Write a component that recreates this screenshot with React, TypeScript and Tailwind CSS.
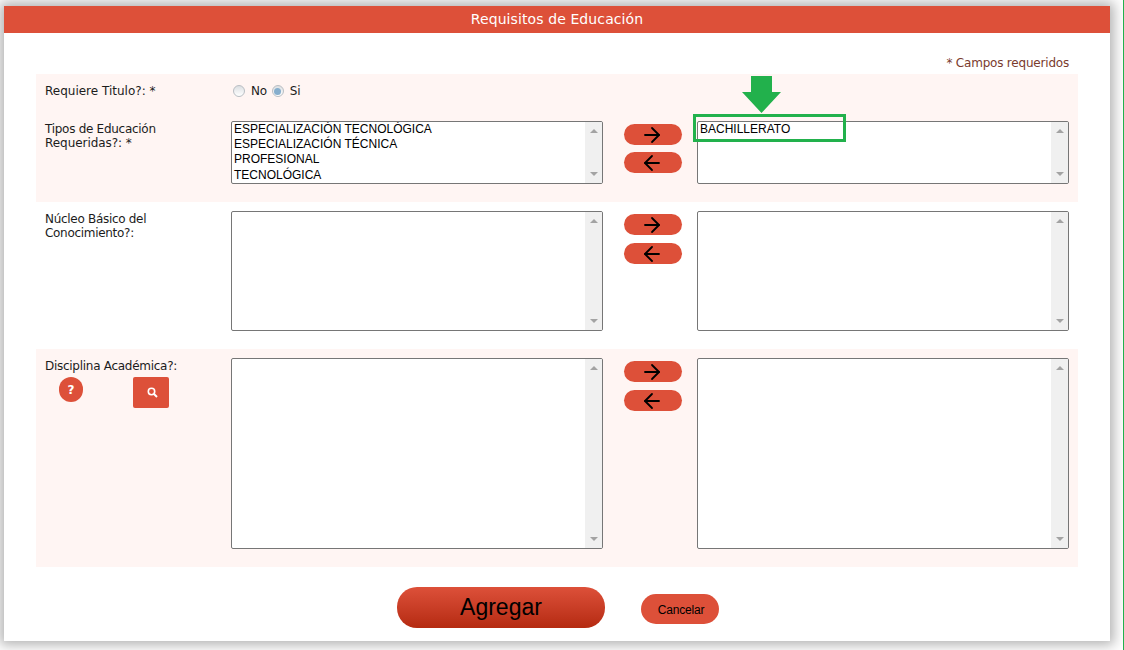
import { ArrowLeft, ArrowRight } from 'lucide-react';

const LABEL_FONT = "font-['DejaVu_Sans',sans-serif]";

function ListBox({ height, items = [] }: { height: string; items?: string[] }) {
  return (
    <div className={`${height} flex w-[372px] shrink-0 overflow-hidden rounded-[2px] border border-[#767676] bg-white`}>
      <div className="min-w-0 flex-1 pl-[2px] font-['Liberation_Sans',sans-serif] text-[12px] leading-[15.2px] text-black">
        {items.map((item) => (
          <div key={item} className="whitespace-nowrap">{item}</div>
        ))}
      </div>
      <div className="flex w-[17px] flex-col items-center justify-between bg-[#f0f0f0] py-[7px]">
        <span className="h-0 w-0 border-x-[4px] border-b-[4px] border-x-transparent border-b-[#a3a3a3]" />
        <span className="h-0 w-0 border-x-[4px] border-t-[4px] border-x-transparent border-t-[#a3a3a3]" />
      </div>
    </div>
  );
}

function MoveButtons({ gap }: { gap: string }) {
  return (
    <div className={`ml-[21px] mr-[15px] mt-[3px] flex w-[58px] shrink-0 flex-col ${gap}`}>
      <button className="flex h-[21px] w-[58px] items-center justify-center rounded-full bg-[#dd5039] pr-[3px] text-black">
        <ArrowRight size={24} strokeWidth={1.8} />
      </button>
      <button className="flex h-[21px] w-[58px] items-center justify-center rounded-full bg-[#dd5039] pr-[3px] text-black">
        <ArrowLeft size={24} strokeWidth={1.8} />
      </button>
    </div>
  );
}

function Radio({ checked }: { checked?: boolean }) {
  return (
    <span className="flex h-[12px] w-[12px] items-center justify-center rounded-full border border-[#b9bec3] bg-gradient-to-b from-[#dcdfe2] to-white">
      {checked && <span className="h-[7px] w-[7px] rounded-full bg-[#86aecd]" />}
    </span>
  );
}

export default function App() {
  return (
    <div className={`relative h-[650px] w-[1124px] overflow-hidden bg-white ${LABEL_FONT}`}>
      <div className="pl-[4px] pt-[6px]">
        <div className="h-[635px] w-[1106px] bg-white shadow-[0_0_12px_4px_rgba(0,0,0,0.3)]">
          <div className="flex h-[27px] items-center justify-center bg-[#dd5039] text-[14px] tracking-[0.1px] text-white">
            Requisitos de Educación
          </div>

          <div className="flex h-[41px] items-end justify-end pb-[3px] pr-[41px] text-[12px] leading-[15px] tracking-[-0.2px] text-[#7a3b2e]">
            * Campos requeridos
          </div>

          <div className="ml-[32px] w-[1042px]">
            <div className="h-[128px] bg-[#fff5f3] pl-[9px] text-[12px] leading-[14px] text-[#1c1c1c]">
              <div className="flex h-[47px] items-start pt-[10px]">
                <div className="w-[186px]">Requiere Titulo?: *</div>
                <div className="flex items-center">
                  <span className="ml-[2px]"><Radio /></span>
                  <span className="ml-[6px] tracking-[-0.3px]">No</span>
                  <span className="ml-[5px]"><Radio checked /></span>
                  <span className="ml-[6px]">Si</span>
                </div>
              </div>
              <div className="flex">
                <div className="w-[186px] pt-[1px] tracking-[-0.28px]">Tipos de Educación<br /><span className="tracking-[-0.05px]">Requeridas?: *</span></div>
                <ListBox
                  height="h-[63px]"
                  items={['ESPECIALIZACIÓN TECNOLÓGICA', 'ESPECIALIZACIÓN TÉCNICA', 'PROFESIONAL', 'TECNOLÓGICA']}
                />
                <MoveButtons gap="gap-[7px]" />
                <ListBox height="h-[63px]" items={['BACHILLERATO']} />
              </div>
            </div>

            <div className="flex h-[147px] pl-[9px] pt-[9px] text-[12px] leading-[14px] tracking-[-0.3px] text-[#1c1c1c]">
              <div className="w-[186px] pt-[1px]">Núcleo Básico del<br />Conocimiento?:</div>
              <ListBox height="h-[120px]" />
              <MoveButtons gap="gap-[8px]" />
              <ListBox height="h-[120px]" />
            </div>

            <div className="flex h-[218px] bg-[#fff5f3] pl-[9px] pt-[9px] text-[12px] leading-[14px] text-[#1c1c1c]">
              <div className="w-[186px]">
                <div className="pt-[1px] tracking-[-0.28px]">Disciplina Académica?:</div>
                <div className="mt-[4px] flex items-start">
                  <span className="ml-[14px] flex h-[25px] w-[24px] items-center justify-center rounded-full bg-[#dd5039] pt-[1px] text-[12px] font-bold text-white">?</span>
                  <span className="ml-[50px] flex h-[31px] w-[36px] items-center justify-center rounded-[2px] bg-[#dd5039]">
                    <svg className="ml-[3px]" width="11" height="11" viewBox="0 0 11 11" fill="none" stroke="white">
                      <circle cx="4.5" cy="4.5" r="3.2" strokeWidth="1.6" />
                      <path d="M7 7l3 3" strokeWidth="2" />
                    </svg>
                  </span>
                </div>
              </div>
              <ListBox height="h-[191px]" />
              <MoveButtons gap="gap-[8px]" />
              <ListBox height="h-[191px]" />
            </div>
          </div>

          <div className="ml-[393px] mt-[20px] flex items-center font-['Liberation_Sans',sans-serif] text-black">
            <button className="flex h-[41px] w-[208px] items-center justify-center rounded-[20px] bg-gradient-to-b from-[#dd5039] to-[#b52a10] text-[23px]">
              Agregar
            </button>
            <button className="ml-[36px] mt-[3px] flex h-[30px] w-[78px] items-center justify-center rounded-[15px] bg-[#dd5039] pl-[2px] pt-[2px] text-[12px] tracking-[-0.2px]">
              Cancelar
            </button>
          </div>
        </div>
      </div>

      {/* green annotation drawn over the screenshot */}
      <div className="absolute left-[693px] top-[114px] h-[28px] w-[153px] border-[3px] border-[#22b14c]" />
      <svg className="absolute left-[742px] top-[76px]" width="39" height="37" viewBox="0 0 39 37">
        <path d="M9 0h21v16h9L19.5 37 0 16h9z" fill="#22b14c" />
      </svg>
      <div className="absolute right-0 top-0 h-[650px] w-[1px] bg-[#22b14c]" />
    </div>
  );
}
